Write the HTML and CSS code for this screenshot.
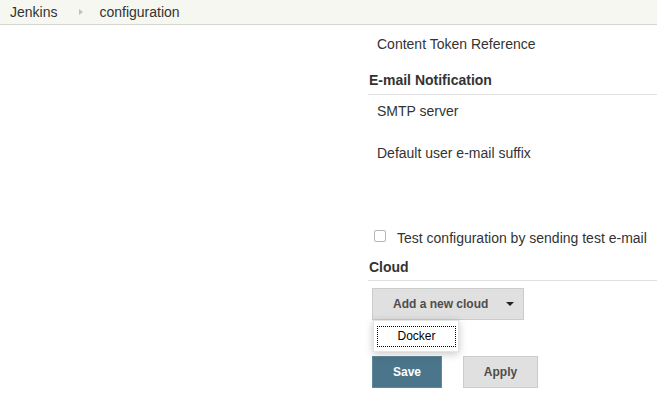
FILE: index.html
```html
<!DOCTYPE html>
<html>
<head>
<meta charset="utf-8">
<link rel="stylesheet" href="styles.css">
</head>
<body>
<div class="breadcrumbs">
  <a class="crumb">Jenkins</a>
  <span class="sep"></span>
  <a class="crumb">configuration</a>
</div>
<div class="page">
  <div class="side"></div>
  <div class="main">
    <div class="field first">Content Token Reference</div>
    <div class="section">E-mail Notification</div>
    <div class="field smtp">SMTP server</div>
    <div class="field suffix">Default user e-mail suffix</div>
    <label class="check"><span class="box"></span>Test configuration by sending test e-mail</label>
    <div class="section cloud">Cloud</div>
    <div class="menu-wrap">
      <button class="btn add">Add a new cloud<span class="caret"></span></button>
      <div class="menu"><div class="item">Docker</div></div>
    </div>
    <div class="actions">
      <button class="btn save">Save</button>
      <button class="btn apply">Apply</button>
    </div>
  </div>
</div>
</body>
</html>
```
FILE: styles.css
```css
html, body {
  margin: 0;
  padding: 0;
  background: #fff;
  font-family: "Liberation Sans", Arial, sans-serif;
  color: #333;
  font-size: 14px;
}
.breadcrumbs {
  height: 24px;
  background: #f5f7f0;
  border-bottom: 1px solid #d3d7cf;
  display: flex;
  align-items: center;
  padding-left: 10px;
  box-sizing: content-box;
}
.crumb {
  font-size: 14px;
  color: #333;
  line-height: 16px;
}
.sep {
  width: 0;
  height: 0;
  border-top: 3px solid transparent;
  border-bottom: 3px solid transparent;
  border-left: 4px solid #c0c0c0;
  margin: 0 16px 0 22px;
}
.page {
  display: flex;
}
.side {
  width: 368px;
  flex: none;
}
.main {
  flex: 1;
  display: flex;
  flex-direction: column;
  align-items: flex-start;
}
.field {
  line-height: 16px;
  padding-left: 9px;
}
.field.first { margin-top: 11px; }
.section {
  align-self: stretch;
  font-weight: bold;
  line-height: 16px;
  padding: 0 0 6px 1px;
  border-bottom: 1px solid #e0e0e0;
  margin-top: 20px;
}
.field.smtp { margin-top: 8px; }
.field.suffix { margin-top: 26px; }
.check {
  display: flex;
  align-items: center;
  margin-top: 69px;
  line-height: 16px;
  padding-left: 6px;
}
.box {
  width: 10px;
  height: 10px;
  border: 1px solid #b5b5b5;
  border-radius: 2px;
  background: #fff;
  margin-right: 11px;
  margin-top: -4px;
}
.section.cloud {
  margin-top: 13px;
  padding-bottom: 5px;
}
.btn {
  font-family: "Liberation Sans", Arial, sans-serif;
  font-size: 12px;
  font-weight: bold;
  border: 1px solid #cccccc;
  background: #e0e0e0;
  color: #4d4d4d;
  height: 32px;
  padding: 0;
  cursor: pointer;
}
.menu-wrap {
  position: relative;
  margin-top: 7px;
  margin-left: 4px;
}
.add {
  width: 152px;
  display: flex;
  align-items: center;
  padding-left: 20px;
}
.caret {
  width: 0;
  height: 0;
  border-left: 4px solid transparent;
  border-right: 4px solid transparent;
  border-top: 4px solid #222;
  margin-left: 18px;
}
.menu {
  position: absolute;
  left: 1px;
  top: 32px;
  width: 86px;
  height: 32px;
  background: #fff;
  border: 1px solid #e4e4e4;
  box-shadow: 0 2px 8px rgba(0,0,0,0.22);
  box-sizing: border-box;
  padding: 5px 2px 0 3px;
}
.item {
  border: 1px dotted #000;
  height: 21px;
  box-sizing: border-box;
  font-size: 12px;
  color: #000;
  text-align: center;
  line-height: 19px;
}
.actions {
  display: flex;
  margin-top: 36px;
  margin-left: 4px;
  gap: 21px;
}
.save {
  width: 70px;
  background: #4b758b;
  border-color: #5e889b;
  color: #fff;
}
.apply {
  width: 75px;
}
```
